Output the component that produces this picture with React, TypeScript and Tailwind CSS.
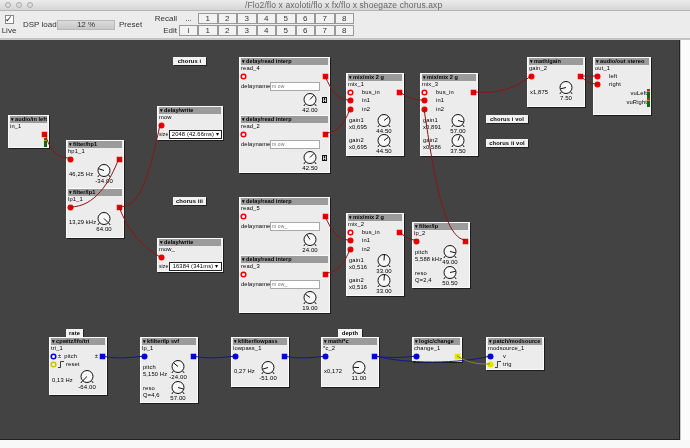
import React from 'react';

const RED = '#e80000';
const BLUE = '#0000e0';
const YELLOW = '#e8e000';

const Knob: React.FC<{ value: string; bipolar?: boolean }> = ({ value, bipolar }) => {
  const v = parseFloat(value);
  const angle = bipolar ? (v / 64) * 135 : (v / 64) * 270 - 135;
  const a = (angle * Math.PI) / 180;
  return (
    <div className="flex w-[24px] shrink-0 flex-col items-center">
      <svg width="16" height="14" viewBox="0 0 16 14" className="shrink-0">
        <path d="M3.6 10.6 L1.8 13 M12.4 10.6 L14.2 13" stroke="#111" strokeWidth="1" fill="none" />
        <circle cx="8" cy="6.5" r="6" fill="#f8f8f8" stroke="#111" strokeWidth="1" />
        <line x1="8" y1="6.5" x2={8 + 5.6 * Math.sin(a)} y2={6.5 - 5.6 * Math.cos(a)} stroke="#111" strokeWidth="1" />
      </svg>
      <span className="h-[7px] whitespace-nowrap text-center text-[6px] leading-[7px]">{value}</span>
    </div>
  );
};

const InPort: React.FC<{ color?: string; ring?: boolean }> = ({ color = RED, ring }) => (
  <svg width="7" height="7" viewBox="0 0 7 7" className="shrink-0">
    <circle cx="3.5" cy="3.5" r={ring ? 2.3 : 3} fill={ring ? '#f4f4f4' : color} stroke={color} strokeWidth={ring ? 1.5 : 0} />
  </svg>
);

const OutPort: React.FC<{ color?: string }> = ({ color = RED }) => (
  <svg width="5" height="5" viewBox="0 0 5 5" className="shrink-0 overflow-visible">
    <rect x="-0.25" y="-0.25" width="5.5" height="5.5" fill={color} />
  </svg>
);

const Pulse = () => (
  <svg width="6" height="7" viewBox="0 0 6 7" className="ml-[1px] shrink-0">
    <path d="M0 6.5 H2.5 V0.5 H6" stroke="#111" strokeWidth="0.8" fill="none" />
  </svg>
);

const Row: React.FC<{ children: React.ReactNode; tall?: boolean; className?: string }> = ({ children, tall, className }) => (
  <div className={`flex items-center pr-[1px] ${tall ? 'h-[8.5px]' : 'h-[8px]'} ${className ?? ''}`}>{children}</div>
);

const Node: React.FC<{ box: string; title: string; name: string; children?: React.ReactNode }> = ({ box, title, name, children }) => (
  <div className={`absolute flex flex-col border border-[#fafafa] bg-[#ececec] shadow-[1px_1px_0_#1c1c1c] ${box}`}>
    <div className="mx-[1px] flex h-[7px] shrink-0 items-center gap-[1px] whitespace-nowrap bg-[#9b9b9b] pl-[1px] text-[5.6px] font-bold leading-[7px] tracking-[0.05px]">
      <span className="text-[5px]">▾</span>
      {title}
    </div>
    <div className="h-[7px] shrink-0 whitespace-nowrap pl-[1px] leading-[7px]">{name}</div>
    {children}
  </div>
);

const KnobRow: React.FC<{ label: string; value: string; bipolar?: boolean; right: string; top: string }> = ({ label, value, bipolar, right, top }) => (
  <div className={`mt-[1px] flex items-start justify-between pl-[2px] ${right}`}>
    <span className={`w-0 whitespace-nowrap ${top}`}>{label}</span>
    <Knob value={value} bipolar={bipolar} />
  </div>
);

const DelayRead: React.FC<{ box: string; name: string; text: string; value: string; hold?: boolean }> = ({ box, name, text, value, hold }) => (
  <Node box={box} title="delay/read interp" name={name}>
    <Row>
      <InPort ring />
      <span className="flex-1" />
      <OutPort />
    </Row>
    <div className="mt-[1px] flex h-[10px] items-center pl-[1px]">
      <span className="w-[29px] whitespace-nowrap">delayname</span>
      <div className="h-[9px] w-[50px] border border-[#a8a8a8] bg-white pl-[1px] text-[5px] leading-[7px] text-[#777]">{text}</div>
    </div>
    <div className="mt-[2px] flex items-start">
      <div className="ml-[58px]">
        <Knob value={value} />
      </div>
      {hold && <div className="mt-[4px] h-[6px] w-[5px] bg-[#111] text-center text-[5px] font-bold leading-[6px] text-white">H</div>}
    </div>
  </Node>
);

const Mix: React.FC<{ box: string; name: string; g1: string; g2: string; v1: string; v2: string }> = ({ box, name, g1, g2, v1, v2 }) => (
  <Node box={box} title="mix/mix 2 g" name={name}>
    <Row tall>
      <InPort ring />
      <span className="ml-[8px] flex-1">bus_in</span>
      <OutPort />
    </Row>
    <Row tall>
      <InPort />
      <span className="ml-[8px]">in1</span>
    </Row>
    <Row tall>
      <InPort />
      <span className="ml-[8px]">in2</span>
    </Row>
    {[
      ['gain1', g1, v1],
      ['gain2', g2, v2],
    ].map(([label, gain, value]) => (
      <div key={label} className="flex h-[20px] items-start justify-between pl-[2px] pr-[7px]">
        <div className="mt-[3px] w-0 whitespace-nowrap leading-[7px]">
          {label}
          <br />
          {gain}
        </div>
        <Knob value={value} />
      </div>
    ))}
  </Node>
);

const TwoKnobs: React.FC<{ rows: [string, string, string, boolean][] }> = ({ rows }) => (
  <>
    {rows.map(([label, sub, value, bip]) => (
      <div key={label} className="flex h-[21px] items-start justify-between pl-[2px] pr-[7px]">
        <div className="mt-[4px] w-0 whitespace-nowrap leading-[7px]">
          {label}
          <br />
          {sub}
        </div>
        <Knob value={value} bipolar={bip} />
      </div>
    ))}
  </>
);

const Comment: React.FC<{ box: string; text: string }> = ({ box, text }) => (
  <div className={`absolute h-[8px] whitespace-nowrap bg-[#f2f2f2] text-center font-bold leading-[8px] shadow-[1px_1px_0_#222] ${box}`}>{text}</div>
);

const Vu: React.FC<{ className?: string }> = ({ className }) => (
  <div className={`flex w-[3px] shrink-0 flex-col ${className ?? ''}`}>
    <div className="h-[2px] bg-[#a03020]" />
    <div className="h-[1px] bg-[#b0a020]" />
    <div className="flex-1 bg-[#0c6a0c]" />
  </div>
);

const DelayWrite: React.FC<{ box: string; name: string; size: string }> = ({ box, name, size }) => (
  <Node box={box} title="delay/write" name={name}>
    <Row>
      <InPort />
    </Row>
    <div className="mt-[1px] flex h-[9px] items-center pl-[1px]">
      <span className="w-[10px] shrink-0 whitespace-nowrap text-[5px]">size</span>
      <div className="flex h-[9px] w-[53px] items-center justify-center gap-[2px] whitespace-nowrap border border-[#222] bg-white">
        {size}
        <span>▾</span>
      </div>
    </div>
  </Node>
);

const Wires = () => (
  <svg width="680" height="400" viewBox="0 40 680 400" className="pointer-events-none absolute left-0 top-0" fill="none" strokeWidth="1">
    <g stroke="#8a1515">
      <path d="M45 133 C50 152 58 158 70 158" />
      <path d="M119 158 C110 182 95 207 70 207" />
      <path d="M119 207 C140 207 148 180 160 125" />
      <path d="M119 207 C128 230 140 245 160 257" />
      <path d="M325 76 C332 92 338 100 350 100" />
      <path d="M325 133 C338 133 344 124 350 109" />
      <path d="M400 92 C408 98 414 100 424 100" />
      <path d="M424 109 C432 160 442 240 466 240" />
      <path d="M474 92 C500 94 515 88 531 76" />
      <path d="M581 76 H598" />
      <path d="M581 76 C586 82 590 84 598 84" />
      <path d="M325 216 C332 232 338 240 350 240" />
      <path d="M325 273 C338 273 344 264 350 249" />
      <path d="M400 232 C406 238 410 240 416 240" />
    </g>
    <g stroke="#15158a">
      <path d="M102 356 C115 359 130 358 144 356" />
      <path d="M193 356 C206 359 220 358 235 356" />
      <path d="M284 356 C297 359 312 358 326 356" />
      <path d="M375 356 C388 358 402 358 416 356" />
      <path d="M375 356 C405 364 460 364 490 356" />
    </g>
    <path d="M457 356 C470 364 480 364 490 364" stroke="#8a8a15" />
  </svg>
);

const CELLS = ['1', '2', '3', '4', '5', '6', '7', '8'];

const PresetCell: React.FC<{ label: string; plain?: boolean }> = ({ label, plain }) => (
  <div className={`flex h-[11px] items-center justify-center ${plain ? '' : 'border border-[#999] bg-[#f2f2f2]'}`}>{label}</div>
);

export default function App() {
  return (
    <div className="flex h-[448px] w-[690px] flex-col overflow-hidden bg-white font-['Liberation_Sans',sans-serif] text-[5.8px] tracking-[0.12px] text-[#000] blur-[0.2px]">
      <div className="flex h-[11px] shrink-0 items-center border-b border-[#b4b4b4] bg-gradient-to-b from-[#ececec] to-[#d6d6d6] pl-[5px]">
        <div className="flex gap-[5px]">
          <span className="h-[6px] w-[6px] rounded-full border border-[#aaa] bg-[#ddd]" />
          <span className="h-[6px] w-[6px] rounded-full border border-[#aaa] bg-[#ddd]" />
          <span className="h-[6px] w-[6px] rounded-full border border-[#aaa] bg-[#ddd]" />
        </div>
        <span className="ml-[212px] whitespace-nowrap text-[8.5px] tracking-[0.1px] text-[#666]">/Flo2/flo x axoloti/flo x fx/flo x shoegaze chorus.axp</span>
      </div>

      <div className="flex h-[29px] shrink-0 items-center border-b-2 border-[#c4c4c4] bg-[#ececec] text-[8px] tracking-[0px] text-[#333]">
        <div className="flex w-[20px] flex-col items-center pr-[2px]">
          <div className="flex h-[9px] w-[9px] items-center justify-center border border-[#888] bg-white text-[9px] leading-none text-[#111]">✓</div>
          <span className="mt-[3px] leading-[8px]">Live</span>
        </div>
        <span className="ml-[3px] w-[34px] whitespace-nowrap">DSP load</span>
        <div className="flex h-[10px] w-[58px] items-center justify-center border border-[#b8b8b8] bg-gradient-to-b from-[#dcdcdc] to-[#c8c8c8]">12 %</div>
        <span className="ml-[4px] w-[36px]">Preset</span>
        <div className="flex w-[22px] flex-col items-end gap-y-[1px] leading-[11px]">
          <span>Recall</span>
          <span>Edit</span>
        </div>
        <div className="ml-[2px] grid w-[175px] grid-cols-[19px_repeat(8,19.5px)] grid-rows-[11px_11px] gap-y-[1px]">
          <PresetCell label="..." plain />
          {CELLS.map((c) => (
            <PresetCell key={`r${c}`} label={c} />
          ))}
          <PresetCell label="i" />
          {CELLS.map((c) => (
            <PresetCell key={`e${c}`} label={c} />
          ))}
        </div>
      </div>

      <div className="flex shrink-0">
        <div className="relative h-[400px] w-[680px] bg-[#434343] shadow-[inset_0_-1px_0_#222,inset_-1px_0_0_#222]">
          <Comment box="left-[173px] top-[17px] w-[33px]" text="chorus i" />
          <Comment box="left-[173px] top-[157px] w-[33px]" text="chorus iii" />
          <Comment box="left-[486px] top-[75px] w-[42px]" text="chorus i vol" />
          <Comment box="left-[486px] top-[99px] w-[42px]" text="chorus ii vol" />
          <Comment box="left-[66px] top-[289px] w-[17px]" text="rate" />
          <Comment box="left-[338px] top-[289px] w-[24px]" text="depth" />

          <Node box="left-[8px] top-[75px] w-[41px] h-[33px]" title="audio/in left" name="in_1">
            <Row className="justify-end">
              <OutPort />
            </Row>
            <div className="flex justify-end pr-[1px]">
              <Vu className="h-[9px]" />
            </div>
          </Node>

          <Node box="left-[66px] top-[100px] w-[58px] h-[49px]" title="filter/hp1" name="hp1_1">
            <Row>
              <InPort />
              <span className="flex-1" />
              <OutPort />
            </Row>
            <KnobRow label="46,25 Hz" value="-34.00" bipolar right="pr-[7px]" top="mt-[6px]" />
          </Node>

          <Node box="left-[66px] top-[148px] w-[58px] h-[50px]" title="filter/lp1" name="lp1_1">
            <Row>
              <InPort />
              <span className="flex-1" />
              <OutPort />
            </Row>
            <KnobRow label="13,29 kHz" value="64.00" bipolar right="pr-[7px]" top="mt-[6px]" />
          </Node>

          <DelayWrite box="left-[157px] top-[66px] w-[66px] h-[34px]" name="mow" size="2048 (42.66ms)" />
          <DelayWrite box="left-[157px] top-[198px] w-[66px] h-[34px]" name="mow_" size="16384 (341ms)" />

          <DelayRead box="left-[239px] top-[17px] w-[91px] h-[59px]" name="read_4" text="m ow" value="42.00" hold />
          <DelayRead box="left-[239px] top-[75px] w-[91px] h-[58px]" name="read_2" text="m ow" value="42.50" hold />
          <DelayRead box="left-[239px] top-[157px] w-[91px] h-[59px]" name="read_5" text="m ow_" value="24.00" />
          <DelayRead box="left-[239px] top-[215px] w-[91px] h-[58px]" name="read_3" text="m ow_" value="19.00" />

          <Mix box="left-[346px] top-[33px] w-[58px] h-[83px]" name="mix_1" g1="x0,695" g2="x0,695" v1="44.50" v2="44.50" />
          <Mix box="left-[420px] top-[33px] w-[58px] h-[83px]" name="mix_3" g1="x0,891" g2="x0,586" v1="57.00" v2="37.50" />
          <Mix box="left-[346px] top-[173px] w-[58px] h-[83px]" name="mix_2" g1="x0,516" g2="x0,516" v1="33.00" v2="33.00" />

          <Node box="left-[412px] top-[182px] w-[58px] h-[66px]" title="filter/lp" name="lp_2">
            <Row>
              <InPort />
              <span className="flex-1" />
              <OutPort />
            </Row>
            <TwoKnobs rows={[['pitch', '5,588 kHz', '49.00', true], ['reso', 'Q=2,4', '50.50', false]]} />
          </Node>

          <Node box="left-[527px] top-[17px] w-[58px] h-[50px]" title="math/gain" name="gain_2">
            <Row>
              <InPort />
              <span className="flex-1" />
              <OutPort />
            </Row>
            <KnobRow label="x1,875" value="7.50" right="pr-[6px]" top="mt-[7px]" />
          </Node>

          <Node box="left-[593px] top-[17px] w-[58px] h-[58px]" title="audio/out stereo" name="out_1">
            <Row>
              <InPort />
              <span className="ml-[8px]">left</span>
            </Row>
            <Row>
              <InPort />
              <span className="ml-[8px]">right</span>
            </Row>
            <div className="mt-[1px] flex h-[9px] items-center justify-end">
              <span>vuLeft</span>
              <Vu className="h-[9px]" />
            </div>
            <div className="flex h-[9px] items-center justify-end">
              <span>vuRight</span>
              <Vu className="h-[9px]" />
            </div>
          </Node>

          <Node box="left-[49px] top-[297px] w-[58px] h-[58px]" title="cpwitz/lfo/tri" name="tri_1">
            <Row>
              <InPort color={BLUE} ring />
              <span className="ml-[1px]">±</span>
              <span className="ml-[3px] flex-1">pitch</span>
              <span className="mr-[2px]">±</span>
              <OutPort color={BLUE} />
            </Row>
            <Row>
              <InPort color="#c8c000" ring />
              <Pulse />
              <span className="ml-[2px]">reset</span>
            </Row>
            <div className="mt-[1px]">
              <KnobRow label="0,13 Hz" value="-64.00" bipolar right="pr-[7px]" top="mt-[6px]" />
            </div>
          </Node>

          <Node box="left-[140px] top-[297px] w-[58px] h-[66px]" title="kfilter/lp svf" name="lp_1">
            <Row>
              <InPort color={BLUE} />
              <span className="flex-1" />
              <OutPort color={BLUE} />
            </Row>
            <TwoKnobs rows={[['pitch', '5,150 Hz', '-24.00', true], ['reso', 'Q=4,6', '57.00', false]]} />
          </Node>

          <Node box="left-[231px] top-[297px] w-[58px] h-[50px]" title="kfilter/lowpass" name="lowpass_1">
            <Row>
              <InPort color={BLUE} />
              <span className="flex-1" />
              <OutPort color={BLUE} />
            </Row>
            <KnobRow label="0,27 Hz" value="-51.00" bipolar right="pr-[8px]" top="mt-[6px]" />
          </Node>

          <Node box="left-[321px] top-[297px] w-[58px] h-[50px]" title="math/*c" name="*c_2">
            <Row>
              <InPort color={BLUE} />
              <span className="flex-1" />
              <OutPort color={BLUE} />
            </Row>
            <KnobRow label="x0,172" value="11.00" right="pr-[7px]" top="mt-[6px]" />
          </Node>

          <Node box="left-[412px] top-[297px] w-[50px] h-[25px]" title="logic/change" name="change_1">
            <Row>
              <InPort color={BLUE} />
              <span className="flex-1" />
              <OutPort color={YELLOW} />
            </Row>
          </Node>

          <Node box="left-[486px] top-[297px] w-[58px] h-[33px]" title="patch/modsource" name="modsource_1">
            <Row>
              <InPort color={BLUE} />
              <span className="ml-[9px]">v</span>
            </Row>
            <Row>
              <InPort color={YELLOW} />
              <Pulse />
              <span className="ml-[2px]">trig</span>
            </Row>
          </Node>

          <Wires />
        </div>
        <div className="h-[400px] w-[10px] border-l border-[#c8c8c8] bg-[#fbfbfb]" />
      </div>
      <div className="h-[8px] bg-[#f8f8f8]" />
    </div>
  );
}
